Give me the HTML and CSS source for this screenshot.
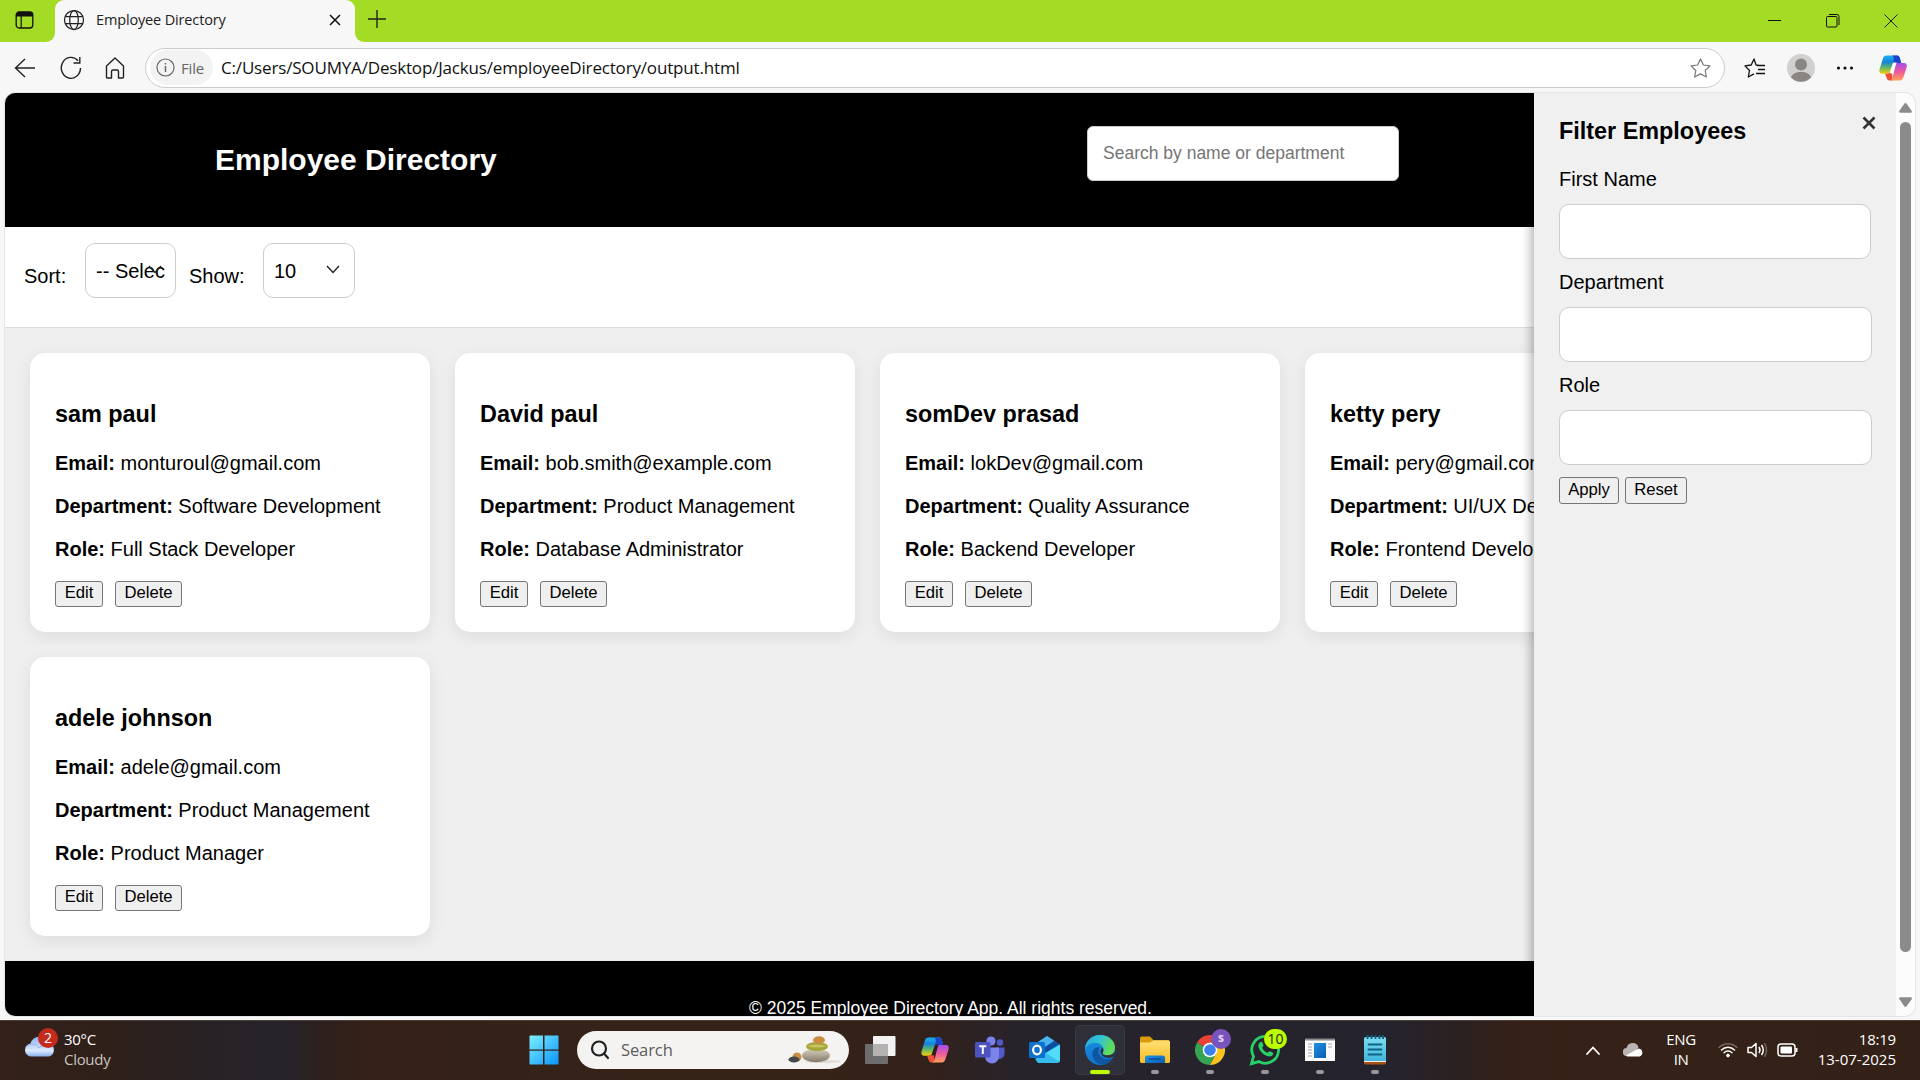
FILE: index.html
```html
<!DOCTYPE html>
<html lang="en">
<head>
<meta charset="utf-8">
<title>Employee Directory</title>
<link rel="stylesheet" href="styles.css">
</head>
<body>
<svg class="defs" width="0" height="0" aria-hidden="true">
  <defs>
    <linearGradient id="cpA" x1="0" y1="0" x2="0" y2="1"><stop offset="0" stop-color="#1fb0f2"/><stop offset=".35" stop-color="#1583dc"/><stop offset=".65" stop-color="#5cb56a"/><stop offset="1" stop-color="#f5cf0a"/></linearGradient>
    <linearGradient id="cpB" x1="0" y1="0" x2="0" y2="1"><stop offset="0" stop-color="#a04df0"/><stop offset=".5" stop-color="#ee5a9c"/><stop offset="1" stop-color="#ffa05a"/></linearGradient>
    <linearGradient id="winG" x1="0" y1="0" x2="1" y2="1"><stop offset="0" stop-color="#7cf0ff"/><stop offset="1" stop-color="#0a94fb"/></linearGradient>
    <linearGradient id="cloudG" x1="0" y1="0" x2="0" y2="1"><stop offset="0" stop-color="#8fb0f0"/><stop offset=".7" stop-color="#dbe9fd"/><stop offset="1" stop-color="#86aef0"/></linearGradient>
    <linearGradient id="edgeG" x1="0" y1="0" x2="1" y2=".4"><stop offset="0" stop-color="#2aa6e0"/><stop offset=".5" stop-color="#32c3d4"/><stop offset="1" stop-color="#62dc54"/></linearGradient>
    <linearGradient id="edgeB" x1="0" y1="0" x2="0" y2="1"><stop offset="0" stop-color="#1b8fdf"/><stop offset="1" stop-color="#0f74d0"/></linearGradient>
    <linearGradient id="foldG" x1="0" y1="0" x2="0" y2="1"><stop offset="0" stop-color="#ffdf7a"/><stop offset="1" stop-color="#fcbc1c"/></linearGradient>
    <linearGradient id="blueG" x1="0" y1="0" x2="1" y2="1"><stop offset="0" stop-color="#1f93e4"/><stop offset="1" stop-color="#0a5cb4"/></linearGradient>
    <linearGradient id="noteG" x1="0" y1="0" x2="0" y2="1"><stop offset="0" stop-color="#7fdcef"/><stop offset="1" stop-color="#41b5dc"/></linearGradient>
    <linearGradient id="stoneG" x1="0" y1="0" x2="0" y2="1"><stop offset="0" stop-color="#d8d0bd"/><stop offset="1" stop-color="#82796a"/></linearGradient>
    <symbol id="copilot" viewBox="0 0 28 28">
      <path d="M7.500 1.500h10.700c1.800 0 2.300 1.300 2.900 3.500L22 9h-7L11.500 16c-.8 2.500-1.500 3.700-3.500 3.700H3.200c-2.500 0-3.300-2-2.700-4.300L4 4.300C4.700 2.300 5.700 1.500 7.500 1.500z" fill="url(#cpA)"/>
      <path d="M15 1.500h3.200c1.800 0 2.300 1.300 2.900 3.500l1 4H15.500l-1.500 2c0-3 .8-4.500.8-6.500 0-1.500-.6-2.500-1.800-3z" fill="#1b44cc"/>
      <path d="M6 19.700h2c2 0 2.800-1.200 3.500-3.700l1.500 4 1 6.500h-3.500c-1.700 0-2.400-1-3-3z" fill="#ee5138"/>
      <path d="M17.500 9H25c2.500 0 3.200 2 2.600 4.300l-3.100 9.800c-.7 2.300-1.700 3.400-3.700 3.400H10.500c2 0 2.600-1.500 3.200-3.500L16.500 11.500c.3-1.300.5-1.800 1-2.500z" fill="url(#cpB)"/>
      <path d="M14.800 8.500h2.900c-.7.700-1 1.700-1.300 2.700L14 19.300h-3.400l2.600-8.300c.4-1.500.8-2.200 1.600-2.500z" fill="currentColor"/>
    </symbol>
  </defs>
</svg>

<div class="tabstrip">
  <span class="workspace"><svg width="20" height="20" viewBox="0 0 20 20"><rect x="1.200" y="2" width="16.600" height="16" rx="3" fill="none" stroke="#111" stroke-width="1.300"/><path d="M1.200 6.500V5a3 3 0 0 1 3-3h10.600a3 3 0 0 1 3 3v1.500z" fill="#111"/><path d="M6.200 6v12" stroke="#111" stroke-width="1.200"/></svg></span>
  <div class="tab">
    <svg width="22" height="22" viewBox="0 0 22 22" fill="none" stroke="#222" stroke-width="1.250"><circle cx="11" cy="11" r="9.500"/><ellipse cx="11" cy="11" rx="4.300" ry="9.500"/><path d="M2.300 7.500h17.400M2.300 14.500h17.400"/></svg>
    <span class="tab-title">Employee Directory</span>
    <svg class="tab-close" width="12" height="12" viewBox="0 0 12 12" stroke="#111" stroke-width="1.500"><path d="M1 1l10 10M11 1L1 11"/></svg>
  </div>
  <svg class="newtab" width="18" height="18" viewBox="0 0 18 18" stroke="#222" stroke-width="1.400"><path d="M9 0v18M0 9h18"/></svg>
  <div class="wincontrols">
    <svg width="14" height="14" viewBox="0 0 14 14" stroke="#111"><path d="M0 6.500h13"/></svg>
    <svg width="14" height="14" viewBox="0 0 14 14" stroke="#111" fill="none"><rect x=".5" y="2.500" width="10.500" height="10.500" rx="1"/><path d="M3 .5h8a2 2 0 0 1 2 2V11"/></svg>
    <svg width="14" height="14" viewBox="0 0 14 14" stroke="#222"><path d="M.5.5l13 13M13.500.5l-13 13"/></svg>
  </div>
</div>

<div class="toolbar">
  <div class="navicons">
    <svg width="22" height="20" viewBox="0 0 22 20" fill="none" stroke="#222" stroke-width="1.400"><path d="M11 1L1.500 10l9.500 9M1.500 10H21"/></svg>
    <svg width="22" height="24" viewBox="0 0 22 24" fill="none" stroke="#222" stroke-width="1.400"><path d="M18 4.800A9.600 10.500 0 1 0 20.500 12M19.800 1v6H13.500"/></svg>
    <svg width="20" height="22" viewBox="0 0 20 22" fill="none" stroke="#222" stroke-width="1.400" stroke-linejoin="round"><path d="M1.500 9L10 1l8.500 8v11a1 1 0 0 1-1 1h-4v-6.500A1.500 1.500 0 0 0 12 13H8a1.500 1.500 0 0 0-1.500 1.500V21h-4a1 1 0 0 1-1-1z"/></svg>
  </div>
  <div class="address">
    <span class="scheme"><svg width="19" height="19" viewBox="0 0 19 19" fill="none" stroke="#666" stroke-width="1.200"><circle cx="9.500" cy="9.500" r="8.500"/><path d="M9.500 8v6M9.500 5v1.500" stroke-width="1.500"/></svg><span class="scheme-label">File</span></span>
    <span class="url">C:/Users/SOUMYA/Desktop/Jackus/employeeDirectory/output.html</span>
    <svg class="star" width="21" height="20" viewBox="0 0 21 20" fill="none" stroke="#777" stroke-width="1.200" stroke-linejoin="round"><path d="M10.500 1l2.900 6 6.600.9-4.800 4.600 1.200 6.500-5.900-3.100L4.600 19l1.200-6.500L1 7.900 7.600 7z"/></svg>
  </div>
  <div class="actions">
    <svg width="22" height="20" viewBox="0 0 22 20" fill="none" stroke="#111" stroke-width="1.300" stroke-linejoin="round"><path d="M14.500 7.200l-2.400-.2L10 1 7.200 7 1 7.900l4.500 4.600L4.300 19l5.700-3.100M13 7.500h8M14 11.500h7M12 15.500h9"/></svg>
    <svg width="28" height="28" viewBox="0 0 28 28"><circle cx="14" cy="14" r="14" fill="#d2d0ce"/><circle cx="14" cy="10.500" r="6" fill="#8a8683"/><path d="M4 23.500c1-3.500 4.500-5.500 10-5.500s9 2 10 5.500a14 14 0 0 1-20 0z" fill="#8a8683"/></svg>
    <svg width="18" height="4" viewBox="0 0 18 4" fill="#111"><circle cx="2.500" cy="2" r="1.600"/><circle cx="9" cy="2" r="1.600"/><circle cx="15.500" cy="2" r="1.600"/></svg>
    <svg class="assist" width="28" height="28"><use href="#copilot"/></svg>
  </div>
</div>

<div class="viewport">
  <div class="page">
    <header class="hero">
      <h1>Employee Directory</h1>
      <input class="search" type="text" placeholder="Search by name or department">
    </header>
    <div class="controls">
      <span class="lbl">Sort:</span>
      <div class="select"><span>-- Selec</span><svg width="14" height="9" viewBox="0 0 14 9" fill="none" stroke="#222" stroke-width="1.400"><path d="M1 1l6 6.500L13 1"/></svg></div>
      <span class="lbl show">Show:</span>
      <div class="select"><span>10</span><svg width="14" height="9" viewBox="0 0 14 9" fill="none" stroke="#222" stroke-width="1.400"><path d="M1 1l6 6.500L13 1"/></svg></div>
    </div>
    <main class="cards">
      <article class="card"><h3>sam paul</h3><p><b>Email:</b> monturoul@gmail.com</p><p><b>Department:</b> Software Development</p><p><b>Role:</b> Full Stack Developer</p><div class="btns"><button>Edit</button><button class="wide">Delete</button></div></article>
      <article class="card"><h3>David paul</h3><p><b>Email:</b> bob.smith@example.com</p><p><b>Department:</b> Product Management</p><p><b>Role:</b> Database Administrator</p><div class="btns"><button>Edit</button><button class="wide">Delete</button></div></article>
      <article class="card"><h3>somDev prasad</h3><p><b>Email:</b> lokDev@gmail.com</p><p><b>Department:</b> Quality Assurance</p><p><b>Role:</b> Backend Developer</p><div class="btns"><button>Edit</button><button class="wide">Delete</button></div></article>
      <article class="card"><h3>ketty pery</h3><p><b>Email:</b> pery@gmail.com</p><p><b>Department:</b> UI/UX Design</p><p><b>Role:</b> Frontend Developer</p><div class="btns"><button>Edit</button><button class="wide">Delete</button></div></article>
      <article class="card"><h3>adele johnson</h3><p><b>Email:</b> adele@gmail.com</p><p><b>Department:</b> Product Management</p><p><b>Role:</b> Product Manager</p><div class="btns"><button>Edit</button><button class="wide">Delete</button></div></article>
    </main>
    <footer class="foot">© 2025 Employee Directory App. All rights reserved.</footer>
    <aside class="filter">
      <svg class="filter-close" width="14" height="14" viewBox="0 0 14 14" stroke="#333" stroke-width="2.600"><path d="M1.500 1.500l11 11M12.500 1.500l-11 11"/></svg>
      <h2>Filter Employees</h2>
      <label>First Name</label><input class="first" type="text">
      <label>Department</label><input type="text">
      <label>Role</label><input type="text">
      <div class="filter-btns"><button>Apply</button><button>Reset</button></div>
    </aside>
  </div>
  <div class="scrollbar">
    <svg width="13" height="10" viewBox="0 0 13 10" fill="#8b8b8b"><path d="M5.300.8q1.200-1.500 2.400 0l4.900 7q.8 2-1 2H1.400q-1.800 0-1-2z"/></svg>
    <div class="thumb"></div>
    <svg class="down" width="13" height="10" viewBox="0 0 13 10" fill="#8b8b8b"><path d="M5.300 9.200q1.200 1.500 2.400 0l4.900-7q.8-2-1-2H1.400q-1.800 0-1 2z"/></svg>
  </div>
</div>

<div class="taskbar">
  <div class="weather">
    <div class="cloud">
      <svg width="32" height="22" viewBox="0 0 32 22"><path d="M7 21.500a6.500 6.500 0 0 1-.5-12.900A9.500 9.500 0 0 1 24.500 8 7 7 0 0 1 25 21.500z" fill="url(#cloudG)"/><path d="M1.500 12C6 8 12 8 15 13c4-4 10-4 14-1" fill="none" stroke="#8fb0f0" stroke-width="1"/></svg>
      <span class="badge">2</span>
    </div>
    <div class="wtext"><span>30°C</span><span class="dim">Cloudy</span></div>
  </div>
  <div class="apps">
    <svg class="win" width="30" height="30" viewBox="0 0 30 30"><path d="M1 .5h13v14H.5V1zM15.500.5H29l.5.5v13.500h-14zM.5 15.700H14v13.800H1l-.5-.5zM15.500 15.700h14V29l-.5.500H15.500z" fill="url(#winG)"/></svg>
    <div class="tsearch">
      <svg width="20" height="20" viewBox="0 0 20 20" fill="none" stroke="#222" stroke-width="2.200" stroke-linecap="round"><circle cx="9" cy="8.500" r="7"/><path d="M14 13.500l4 4.500"/></svg>
      <span>Search</span>
      <svg class="stones" width="54" height="28" viewBox="0 0 54 28"><ellipse cx="35" cy="25.500" rx="18" ry="1.500" fill="#dfd9d2"/><ellipse cx="9" cy="21" rx="4.500" ry="4.500" fill="#c98f45"/><ellipse cx="6" cy="23.500" rx="5.500" ry="3" fill="#44474a"/><ellipse cx="28" cy="19.500" rx="14" ry="6.800" fill="url(#stoneG)"/><ellipse cx="29" cy="10.500" rx="11" ry="4.500" fill="#a5a539"/><path d="M19 10q10-3 20 0-10 3-20 0z" fill="#c5c45e"/><ellipse cx="31" cy="4" rx="6" ry="3.700" fill="#cb8c42"/></svg>
    </div>
    <span class="app"><svg width="32" height="32" viewBox="0 0 32 32"><rect x="9" y="2" width="22.500" height="20" rx="1" fill="#f2f2f2"/><rect x="1" y="10" width="23" height="20" rx="1" fill="#6d6d6d"/><rect x="9" y="10" width="15" height="12" fill="#b5b3b2"/></svg></span>
    <span class="app"><svg width="28" height="28"><use href="#copilot"/></svg></span>
    <span class="app"><svg width="30" height="30" viewBox="0 0 30 30"><circle cx="16" cy="6" r="4.600" fill="#7b83eb"/><circle cx="25" cy="7.500" r="3.200" fill="#5059c9"/><path d="M21 12.500h8.500v6.500a5 5 0 0 1-7 4.500z" fill="#5059c9"/><path d="M10 12.500h14v8.500a7 7 0 0 1-14 1z" fill="#7b83eb"/><rect x="0" y="7" width="15.500" height="15.500" rx="1.500" fill="#4b53bc"/><path d="M4.300 11.300h7M7.800 11.300v7.700" stroke="#fff" stroke-width="2"/></svg></span>
    <span class="app"><svg width="32" height="30" viewBox="0 0 32 30"><path d="M6 9L18 1l12 8-4 9H8z" fill="#1668c4"/><path d="M6 9L18 1l7 4.500-11 8z" fill="#4bb2ec"/><path d="M31 9.500V25a3 3 0 0 1-3 3H9l-3-4 12-7z" fill="#36bdf0"/><path d="M31 9.500L17 18l13 8.500a3 3 0 0 0 1-2z" fill="#50dcfa"/><path d="M30 9L16 18l-4-4L26 6.500z" fill="#0c4da0"/><rect x="0" y="7" width="16" height="16" rx="1.500" fill="#0f71cf"/><ellipse cx="8" cy="15" rx="3.900" ry="4.300" fill="none" stroke="#fff" stroke-width="2.200"/></svg></span>
    <span class="app active"><svg width="32" height="32" viewBox="0 0 32 32"><path d="M1 15C1 7 8 1 16 1s15 6 15 14-2 8-3 10a15 15 0 0 1-12 6C8 31 1 24 1 15z" fill="url(#edgeB)"/><path d="M12 13.500c-3 2-4.500 5-3.500 8.500 1.300 5 6 9 11 8.700 4-.5 7-2.700 8.700-5.700.3-.8-.2-1-.9-.7-3 1.300-7 1.200-9.800-1-3.500-2.800-4-6.500-1.500-10z" fill="#0f559f"/><path d="M1 15.500C1.500 6.500 8 1 16 1c8.500 0 15 5.500 15 12.500 0 5-3.500 7.800-7.500 7.800-4 0-5.500-1.500-4.700-2.800 1.500-2.300 1-6.500-3-8.500C11 7.500 3.500 9 1 15.500z" fill="url(#edgeG)"/><path d="M18.600 13.500c-2.600 2-2.600 6 0 8.300 2.800 2.500 7.400 2.700 10.700 1 .7-.3 1.200.3.900 1L31.500 17c-1.700 3-4.500 4.300-8 4.300-4 0-5.500-1.500-4.700-2.800.8-1.300.8-3-.2-5z" fill="#30303a"/></svg><i class="dot"></i></span>
    <span class="app"><svg width="32" height="28" viewBox="0 0 32 28"><path d="M1 2a1.500 1.500 0 0 1 1.500-1.500H11L14.500 4H30v8H1z" fill="#d99a0b"/><path d="M1 6.500h10l3.500-2H29.500A1.500 1.500 0 0 1 31 6v19.500a1.500 1.500 0 0 1-1.500 1.500h-27A1.500 1.500 0 0 1 1 25.500z" fill="url(#foldG)"/><path d="M6 27v-5a2.500 2.500 0 0 1 2.500-2.500h15A2.500 2.500 0 0 1 26 22v5z" fill="url(#blueG)"/><path d="M10 23h12" stroke="#0b4f96" stroke-width="1.500"/></svg><i class="dot"></i></span>
    <span class="app"><svg width="32" height="32" viewBox="0 0 32 32"><path d="M16 16L3 8.500a15 15 0 0 1 26 0z" fill="#e94335"/><path d="M16 16L3 8.500A15 15 0 0 0 16 31l6-11z" fill="#34a352"/><path d="M16 16l6 4-6 11A15 15 0 0 0 29 8.500H16z" fill="#fcc31e"/><circle cx="16" cy="16" r="7.300" fill="#fff"/><circle cx="16" cy="16" r="5.800" fill="#3c80ee"/></svg><b class="prof">s</b><i class="dot"></i></span>
    <span class="app"><svg width="32" height="32" viewBox="0 0 32 32"><path d="M2.500 29.700l2-7.300A13.400 13.400 0 1 1 9.800 27.600z" fill="none" stroke="#27cf66" stroke-width="2.800"/><path d="M10.800 8.500c1-1 2.200-.8 2.700.3l1 2.500c.3.800-1.200 2-1.200 2.500 1 2.500 3 4.200 5.200 5 .7 0 1.500-1.800 2.300-1.600l2.900 1.400c1 .5.500 2-.3 2.800-1.400 1.400-3.500 1.500-6 .4-3.500-1.500-6-4-7.500-7.500-.9-2.200-.7-4.500.9-5.800z" fill="#27cf66"/></svg><b class="count">10</b><i class="dot"></i></span>
    <span class="app"><svg width="32" height="24" viewBox="0 0 32 24"><rect x="1" y="1" width="30" height="22" fill="#fafafa"/><path d="M1 1.500h30" stroke="#8b8b8b" stroke-width="2"/><rect x="10" y="5" width="12" height="15" fill="url(#blueG)"/><path d="M4 6h4M4 9h4M4 12h4M4 15h4M4 18h4M24 6h4M24 9h4" stroke="#aaa"/></svg><i class="dot"></i></span>
    <span class="app"><svg width="24" height="32" viewBox="0 0 24 32"><rect x="1" y="25" width="22" height="5.500" rx="1.500" fill="#a65416"/><path d="M1 26h22v2H1z" fill="#f5eee8"/><path d="M1 4.500A1.500 1.500 0 0 1 2.500 3h19A1.500 1.500 0 0 1 23 4.500V27H1z" fill="url(#noteG)"/><path d="M4.500 1v4M8.500 1v4M12.500 1v4M16.500 1v4M20 1v4" stroke="#0b5f80" stroke-width="1.900"/><path d="M5.500 10.500h13M5.500 15.500h13M5.500 20.500h13" stroke="#0d6285" stroke-width="1.800" stroke-linecap="round"/></svg><i class="dot"></i></span>
  </div>
  <div class="tray">
    <svg class="up" width="14" height="9" viewBox="0 0 14 9" fill="none" stroke="#fff" stroke-width="1.800" stroke-linecap="round"><path d="M1 8l6-6.500L13 8"/></svg>
    <svg class="onedrive" width="21" height="14" viewBox="0 0 21 14"><path d="M4 13a4 4 0 0 1-.5-8A6.300 6.300 0 0 1 15.500 4l-4 9z" fill="#b9b4b1"/><path d="M4.500 13.500a2.500 2.500 0 0 1-1.500-1L12 7.500l4-2a4.200 4.200 0 0 1 .7 8z" fill="#fff"/></svg>
    <div class="lang"><span>ENG</span><span>IN</span></div>
    <svg class="wifi" width="20" height="16" viewBox="0 0 20 16" fill="none" stroke="#fff" stroke-width="1.500" stroke-linecap="round"><path d="M1 5.500a12.500 12.500 0 0 1 18 0" stroke="#75655c"/><path d="M3.500 8a9 9 0 0 1 13 0M6 10.800a5.500 5.500 0 0 1 8 0"/><circle cx="10" cy="13.500" r="1.400" fill="#fff" stroke-width="1"/></svg>
    <svg class="vol" width="21" height="18" viewBox="0 0 21 18" fill="none" stroke="#fff" stroke-width="1.500" stroke-linejoin="round"><path d="M1 6.500h3.500L9 2.500v13L4.500 11.500H1z"/><path d="M12 6q2 3 0 6M14.500 4q3.500 5 0 10"/><path d="M17.500 2q4 7 0 14" stroke="#75655c"/></svg>
    <svg class="bat" width="21" height="14" viewBox="0 0 21 14" fill="none" stroke="#fff" stroke-width="1.500"><rect x="1" y="1" width="17" height="12" rx="3"/><rect x="3.500" y="3.500" width="11.500" height="7" rx="1" fill="#fff" stroke="none"/><path d="M19.500 5v4" stroke-width="2"/></svg>
    <div class="clock"><span>18:19</span><span class="date">13-07-2025</span></div>
  </div>
</div>
</body>
</html>
```
FILE: styles.css
```css
* { box-sizing: border-box; }
body {
  margin: 0;
  width: 1920px;
  height: 1080px;
  overflow: hidden;
  display: flex;
  flex-direction: column;
  background: #f7f7f7;
  font-family: "Liberation Sans", Arial, sans-serif;
  font-size: 20px;
  color: #000;
}
svg { display: block; flex: none; }
.defs { position: absolute; }

/* browser tab strip */
.tabstrip {
  height: 42px;
  flex: none;
  display: flex;
  background: linear-gradient(90deg, #f7f7f7 0 0) 45px 0 / 320px 100% no-repeat #a4db25;
  font-family: "Open Sans", "Noto Sans", sans-serif;
}
.workspace {
  width: 55px;
  padding: 10px 0 0 15px;
  border-bottom-right-radius: 9px;
  background: #a4db25;
}
.tab {
  width: 300px;
  display: flex;
  align-items: center;
  padding: 0 14px 3px 8px;
  background: #f7f7f7;
  border-radius: 9px 9px 0 0;
  box-shadow: 0 -9px 0 9px #a4db25;
  clip-path: inset(0);
}
.tab-title { margin-left: 11px; font-size: 14.500px; letter-spacing: -.15px; color: #222; white-space: nowrap; }
.tab-close { margin-left: auto; }
.newtab { padding: 10px 0 0 13px; box-sizing: content-box; }
.tabstrip .newtab { border-bottom-left-radius: 9px; background: #a4db25; padding-bottom: 14px; }
.wincontrols { flex: 1; justify-content: flex-end; display: flex; gap: 44px; padding: 14px 22px 0 0; background: #a4db25; }

/* navigation bar */
.toolbar {
  height: 51px;
  flex: none;
  display: flex;
  align-items: center;
  font-family: "Open Sans", "Noto Sans", sans-serif;
}
.navicons { width: 145px; display: flex; align-items: center; gap: 23.500px; padding-left: 14px; }
.address {
  width: 1580px;
  height: 40px;
  display: flex;
  align-items: center;
  padding: 0 13px 0 4px;
  background: #fff;
  border: 1px solid #ccc;
  border-radius: 20px;
}
.scheme {
  width: 63px;
  height: 35px;
  display: flex;
  align-items: center;
  gap: 6px;
  padding-left: 6px;
  border-radius: 18px;
  background: #f3f3f3;
  color: #666;
  font-size: 15px;
}
.scheme-label { line-height: 20px; letter-spacing: -.2px; }
.url { margin-left: 8px; font-size: 17px; letter-spacing: -.17px; color: #111; white-space: nowrap; }
.star { margin-left: auto; }
.actions { display: flex; align-items: center; gap: 21px; padding-left: 19px; color: #fff; }
.assist { margin-left: 4px; }

/* web page area */
.viewport {
  height: 923px;
  flex: none;
  display: flex;
  margin: 0 5px 4px;
  overflow: hidden;
  border-radius: 10px;
  background: #fcfcfc;
  box-shadow: 0 0 0 1px #e6e6e6;
}
.page { width: 1891px; height: 923px; overflow: hidden; position: relative; background: #efefef; }
.hero {
  height: 134px;
  display: flex;
  justify-content: space-between;
  align-items: flex-start;
  padding: 33px 497px 0 210px;
  background: #000;
}
.hero h1 { margin: 17px 0 0; font-size: 30px; line-height: 34px; color: #fff; }
.search {
  width: 312px;
  height: 55px;
  padding: 0 15px;
  border: 1px solid #ccc;
  border-radius: 6px;
  font: 17.500px "Liberation Sans", Arial, sans-serif;
}
.search::placeholder { color: #757575; }
.controls {
  height: 101px;
  display: flex;
  align-items: flex-start;
  padding: 16px 19px 0;
  background: #fff;
  border-bottom: 1px solid #ddd;
}
.lbl { width: 61px; line-height: 23px; margin-top: 22px; }
.show { width: 74px; margin-left: 13px; }
.select {
  width: 91px;
  height: 55px;
  display: flex;
  align-items: center;
  padding: 2px 14px 0 10px;
  border: 1px solid #ccc;
  border-radius: 10px;
  white-space: nowrap;
}
.show + .select { width: 92px; }
.select span { width: 70px; flex: none; overflow: hidden; }
.select svg { margin: -5px 0 0 -18px; }
.cards {
  display: grid;
  grid-template-columns: repeat(4, 400px);
  gap: 25px;
  padding: 25px;
}
.card {
  height: 279px;
  padding: 25px;
  border-radius: 15px;
  background: #fff;
  box-shadow: 0 5px 18px rgba(0, 0, 0, .08);
  white-space: nowrap;
}
.card h3 { margin: 23px 0 24px; font-size: 23.400px; line-height: 27px; }
.card p { margin: 0 0 20px; line-height: 23px; }
.btns { display: flex; gap: 12px; }
button {
  height: 27px;
  width: 48px;
  padding: 0 0 2px;
  border: 1px solid #767676;
  border-radius: 3px;
  background: #efefef;
  color: #000;
  font: 16.670px "Liberation Sans", Arial, sans-serif;
}
.btns button { height: 26px; }
.wide { width: 67px; }
.foot {
  height: 80px;
  padding-top: 37px;
  background: #000;
  color: #fff;
  text-align: center;
  font-size: 17.500px;
  line-height: 20px;
}

/* filter drawer slides over the page */
.filter {
  position: absolute;
  top: 0;
  right: 0;
  width: 362px;
  height: 923px;
  padding: 25px;
  background: #f0f0f0;
  box-shadow: -3px 0 10px rgba(0, 0, 0, .3);
}
.filter-close { position: absolute; top: 23px; right: 20px; }
.filter h2 { margin: 0 0 23px; font-size: 23.400px; line-height: 27px; }
.filter label { display: block; line-height: 23px; margin-bottom: 13px; }
.filter input {
  display: block;
  width: 313px;
  height: 55px;
  margin-bottom: 12px;
  border: 1px solid #ccc;
  border-radius: 10px;
  background: #fff;
}
.filter .first { width: 312px; }
.filter-btns { display: flex; gap: 6px; }
.filter-btns button { width: 60px; padding-bottom: 1px; }
.filter-btns button + button { width: 62px; }

.scrollbar { width: 19px; display: flex; flex-direction: column; align-items: center; padding: 10px 0; }
.thumb { width: 11px; height: 830px; margin-top: 9px; border-radius: 6px; background: #8b8b8b; }
.down { margin-top: auto; margin-bottom: -1px; }

/* taskbar */
.taskbar {
  height: 60px;
  flex: none;
  display: flex;
  border-top: 1px solid #4a4038;
  background: linear-gradient(90deg, #33211a 0, #2f201a 110px, #272225 210px, #26232a 280px, #2e201c 330px, #352118 370px, #352318 820px, #33211a 920px, #27232b 1020px, #25232d 1390px, #2b2120 1460px, #362017 1520px, #342218 1700px, #332017 1920px);
  color: #fff;
  font-family: "Open Sans", "Noto Sans", sans-serif;
  font-size: 15px;
  line-height: 20px;
}
.weather { width: 529px; display: flex; padding: 8px 0 0 24px; }
.cloud { width: 32px; margin: 6px 8px 0 0; position: relative; }
.badge {
  position: absolute;
  left: 14px;
  top: -7px;
  width: 20px;
  height: 20px;
  border-radius: 50%;
  background: #c42b1c;
  font-size: 14px;
  text-align: center;
}
.wtext { display: flex; flex-direction: column; letter-spacing: -.3px; }
.dim { color: #c9c3bf; }
.apps { width: 876px; display: flex; color: #2f1f1a; }
.win { margin: 14px 18px 0 0; }
.tsearch {
  width: 273px;
  height: 38px;
  display: flex;
  align-items: center;
  margin: 10px 6px 0 0;
  padding: 0 7px 0 13px;
  border-radius: 19px;
  background: #f4f3f2;
  color: #5c5c5c;
  font-size: 16.500px;
}
.tsearch span { margin-left: 11px; letter-spacing: -.1px; }
.stones { margin-left: auto; }
.app {
  width: 50px;
  height: 50px;
  margin: 4px 5px 0 0;
  flex: none;
  display: flex;
  align-items: center;
  justify-content: center;
  position: relative;
}
.active { border-radius: 5px; background: #30303a; box-shadow: inset 0 0 0 1px #393941; }
.dot { position: absolute; left: 21px; bottom: 1px; width: 8px; height: 4px; border-radius: 2px; background: #98989c; }
.active .dot { left: 15px; width: 20px; background: #bdfc00; }
.prof, .count { position: absolute; top: 4px; left: 26px; width: 20px; height: 20px; border-radius: 50%; background: #7a54bd; font-size: 12px; line-height: 18px; text-align: center; color: #e5dcf5; }
.count { left: 24px; width: 23px; background: #bdfc00; border-radius: 10px; color: #222; font-size: 14px; font-weight: 400; line-height: 20px; }
.tray { flex: 1; display: flex; align-items: flex-start; padding: 8px 24px 0 0; justify-content: flex-end; }
.up { margin: 17px 23px 0 0; }
.onedrive { margin: 14px 22px 0 0; }
.lang { width: 30px; margin-right: 22px; display: flex; flex-direction: column; align-items: center; letter-spacing: -.4px; }
.wifi { margin: 13px 9px 0 0; }
.vol { margin: 12px 9px 0 0; }
.bat { margin: 14px 19px 0 0; }
.clock { width: 79px; display: flex; flex-direction: column; align-items: flex-end; letter-spacing: -.2px; white-space: nowrap; }
.date { letter-spacing: 0; }
```
